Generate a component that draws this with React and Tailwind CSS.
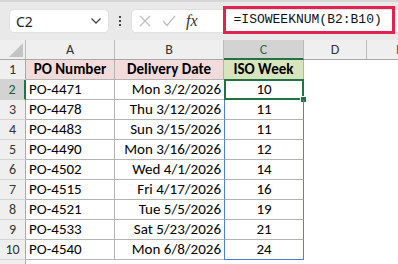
import React from "react";

const rows = [
  ["PO-4471", "Mon 3/2/2026", "10"],
  ["PO-4478", "Thu 3/12/2026", "11"],
  ["PO-4483", "Sun 3/15/2026", "11"],
  ["PO-4490", "Mon 3/16/2026", "12"],
  ["PO-4502", "Wed 4/1/2026", "14"],
  ["PO-4515", "Fri 4/17/2026", "16"],
  ["PO-4521", "Tue 5/5/2026", "19"],
  ["PO-4533", "Sat 5/23/2026", "21"],
  ["PO-4540", "Mon 6/8/2026", "24"],
];

const cellFont = { fontFamily: "Carlito, Lato, 'Open Sans', sans-serif" };

export default function App() {
  return (
    <div
      className="w-[398px] h-[264px] overflow-hidden bg-white flex flex-col text-black"
      style={cellFont}
    >
      {/* formula bar */}
      <div className="h-[40px] shrink-0 bg-[#e9e9e9] border-t-2 border-[#d6d6d6] flex items-start pt-[7px] pl-[9px]">
        <div className="w-[100px] h-[24px] bg-white rounded-[5px] flex items-center justify-between pl-[6px] pr-[6px] border border-[#e0e0e0]">
          <span className="text-[14px] text-[#222]" style={{ fontFamily: "'Noto Sans', sans-serif" }}>C2</span>
          <svg width="12" height="8" viewBox="0 0 12 8">
            <path d="M1.5 1.5 L6 6 L10.5 1.5" fill="none" stroke="#444" strokeWidth="1.3" />
          </svg>
        </div>
        <div className="w-[22px] h-[24px] flex flex-col items-center justify-center gap-[2px]">
          <div className="w-[2px] h-[2px] bg-[#444]" />
          <div className="w-[2px] h-[2px] bg-[#444]" />
          <div className="w-[2px] h-[2px] bg-[#444]" />
        </div>
        <div className="flex-1 h-[24px] bg-white rounded-l-[5px] border border-[#e0e0e0] border-r-0 flex items-center pl-[7px]">
          <svg width="12" height="12" viewBox="0 0 12 12" className="mr-[11px]">
            <path d="M1 1 L11 11 M11 1 L1 11" stroke="#bdbdbd" strokeWidth="1.2" fill="none" />
          </svg>
          <svg width="14" height="12" viewBox="0 0 14 12" className="mr-[10px]">
            <path d="M1 6 L5 10.5 L13 1" stroke="#bdbdbd" strokeWidth="1.2" fill="none" />
          </svg>
          <span className="text-[16px] italic text-[#333] leading-none" style={{ fontFamily: "'Liberation Serif', serif" }}>fx</span>
          <div className="ml-[25px] -mt-[2px] w-[172px] h-[28px] border-[3px] border-[#e0234f] flex items-center pl-[8px]">
            <span className="text-[13px] text-[#111]" style={{ fontFamily: "'Liberation Mono', monospace" }}>=ISOWEEKNUM(B2:B10)</span>
          </div>
        </div>
      </div>

      {/* column headers */}
      <div className="flex h-[20px] shrink-0 bg-[#efefef] border-b border-[#a9a9a9] text-[14px] text-[#333]">
        <div className="w-[26px] h-full border-r border-[#bcbcbc] flex items-end justify-end p-[2px]">
          <svg width="14" height="14" viewBox="0 0 14 14">
            <path d="M14 0 L14 14 L0 14 Z" fill="#c4c4c4" />
          </svg>
        </div>
        <div className="w-[89px] border-r border-[#bcbcbc] flex items-center justify-center">A</div>
        <div className="w-[109px] border-r border-[#bcbcbc] flex items-center justify-center">B</div>
        <div className="w-[80px] bg-[#d3d3d3] border-r border-[#bcbcbc] border-b-2 border-b-[#217346] -mb-[1px] flex items-center justify-center text-[#217346]">C</div>
        <div className="w-[63px] border-r border-[#bcbcbc] flex items-center justify-center">D</div>
        <div className="flex-1 flex items-center justify-end overflow-hidden">
          <span className="text-[#a0522d] w-[2px] overflow-hidden">E</span>
        </div>
      </div>

      {/* row 1 */}
      <div className="flex h-[20px] shrink-0 text-[15px]">
        <div className="w-[26px] bg-[#efefef] border-r border-[#a9a9a9] border-b border-b-[#d4d4d4] flex items-center justify-center text-[14px] text-[#333]">1</div>
        <div className="w-[89px] bg-[#f2dcdb] border-r border-b border-[#b4b4b4] flex items-center justify-center font-bold">PO Number</div>
        <div className="w-[109px] bg-[#f2dcdb] border-r border-b border-[#b4b4b4] flex items-center justify-center font-bold">Delivery Date</div>
        <div className="w-[80px] bg-[#d8e4bc] border-r border-b border-[#b4b4b4] flex items-center justify-center font-bold">ISO Week</div>
        <div className="flex-1" />
      </div>

      {rows.map((r, i) => {
        const sel = i === 0;
        const last = i === rows.length - 1;
        return (
          <div key={i} className="flex h-[20px] shrink-0 text-[15px]">
            <div
              className={
                sel
                  ? "w-[26px] bg-[#d3d3d3] border-r-2 border-[#217346] border-b border-b-[#d4d4d4] flex items-center justify-center text-[14px] text-[#1d5c38]"
                  : "w-[26px] bg-[#efefef] border-r border-[#a9a9a9] border-b border-b-[#d4d4d4] flex items-center justify-center text-[14px] text-[#333]"
              }
            >
              {i + 2}
            </div>
            <div className="w-[89px] border-r border-b border-[#b4b4b4] flex items-center pl-[3px]">{r[0]}</div>
            <div className="w-[109px] border-b border-[#b4b4b4] flex items-center justify-end pr-[3px]">{r[1]}</div>
            <div
              className={
                "relative w-[80px] border-l border-r border-[#4f7fd0] flex items-center justify-center " +
                (last ? "border-b border-b-[#4f7fd0]" : "border-b border-b-[#b4b4b4]")
              }
            >
              {r[2]}
              {sel && (
                <>
                  <div className="absolute -top-[1px] -left-[1px] -right-[1px] -bottom-[1px] border-2 border-[#217346]" />
                  <div className="absolute -bottom-[4px] -right-[4px] w-[7px] h-[7px] bg-[#217346] border border-white" />
                </>
              )}
            </div>
            <div className="flex-1" />
          </div>
        );
      })}

      <div className="flex h-[20px] shrink-0">
        <div className="w-[26px] bg-[#efefef] border-r border-[#a9a9a9]" />
      </div>
    </div>
  );
}
